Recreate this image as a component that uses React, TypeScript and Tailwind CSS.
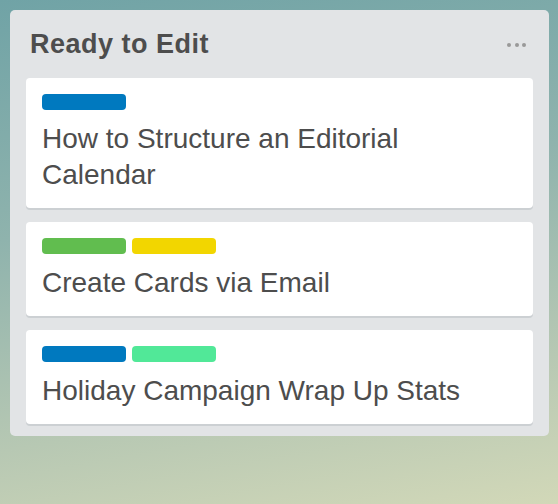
const cards = [
  { title: "How to Structure an Editorial Calendar", labels: ["bg-[#0079bf]"] },
  { title: "Create Cards via Email", labels: ["bg-[#61bd4f]", "bg-[#f2d600]"] },
  { title: "Holiday Campaign Wrap Up Stats", labels: ["bg-[#0079bf]", "bg-[#51e898]"] },
];

export default function App() {
  return (
    <div className="w-[558px] h-[504px] bg-[linear-gradient(170deg,#70a3a6_0%,#8fb3ad_40%,#b7c8b3_75%,#d2d8b8_100%)] p-[10px] font-['Liberation_Sans',Arial,sans-serif]">
      <div className="w-[539px] rounded-[5px] bg-[#e2e4e6] px-4 pt-[18px] pb-3">
        {/* Header */}
        <div className="flex items-center justify-between h-8 mb-[18px]">
          <h2 className="ml-1 text-[27px] leading-8 font-bold text-[#4d4d4d] tracking-[0.5px]">
            Ready to Edit
          </h2>
          <div className="flex gap-[3.5px] mr-[7px] mt-[1px]">
            <span className="w-1 h-1 rounded-full bg-[#999]" />
            <span className="w-1 h-1 rounded-full bg-[#999]" />
            <span className="w-1 h-1 rounded-full bg-[#999]" />
          </div>
        </div>

        {/* Cards */}
        <div className="flex flex-col gap-[14px]">
          {cards.map((c) => (
            <div
              key={c.title}
              className="bg-white rounded-[4px] shadow-[0_2px_0_#ccd0d3] px-4 pt-4 pb-[15px]"
            >
              <div className="flex gap-[6px]">
                {c.labels.map((l, i) => (
                  <span key={i} className={`w-[84px] h-4 rounded-[4px] ${l}`} />
                ))}
              </div>
              <p className="mt-[11px] text-[28px] leading-9 text-[#4d4d4d]">{c.title}</p>
            </div>
          ))}
        </div>
      </div>
    </div>
  );
}
